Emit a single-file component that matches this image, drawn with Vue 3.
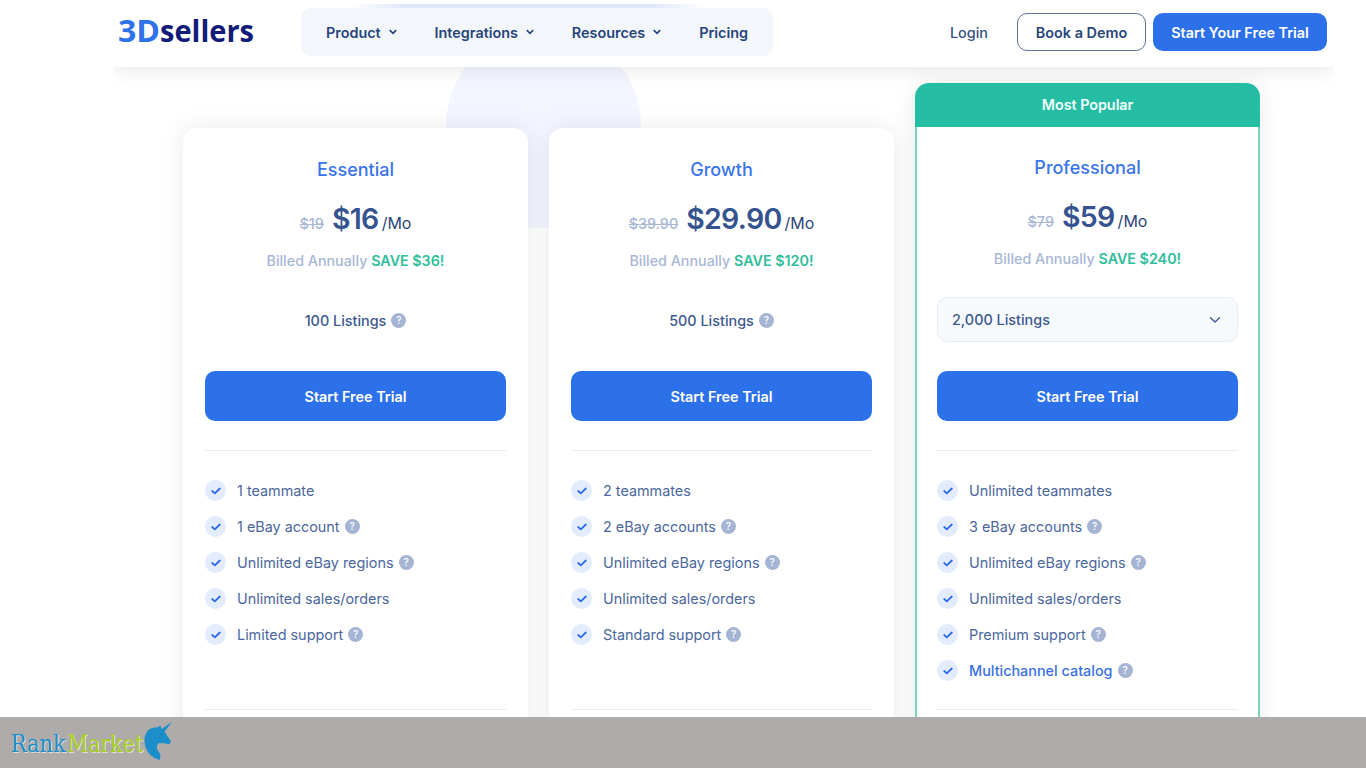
<script setup>
const navItems = [
    {title: 'Product', menu: true},
    {title: 'Integrations', menu: true},
    {title: 'Resources', menu: true},
    {title: 'Pricing', menu: false},
];

const plans = [
    {
        title: 'Essential',
        oldPrice: '$19',
        price: '$16',
        save: 'SAVE $36!',
        listings: '100 Listings',
        popular: false,
        features: [
            {title: '1 teammate'},
            {title: '1 eBay account', help: true},
            {title: 'Unlimited eBay regions', help: true},
            {title: 'Unlimited sales/orders'},
            {title: 'Limited support', help: true},
        ],
    },
    {
        title: 'Growth',
        oldPrice: '$39.90',
        price: '$29.90',
        save: 'SAVE $120!',
        listings: '500 Listings',
        popular: false,
        features: [
            {title: '2 teammates'},
            {title: '2 eBay accounts', help: true},
            {title: 'Unlimited eBay regions', help: true},
            {title: 'Unlimited sales/orders'},
            {title: 'Standard support', help: true},
        ],
    },
    {
        title: 'Professional',
        oldPrice: '$79',
        price: '$59',
        save: 'SAVE $240!',
        listings: '2,000 Listings',
        popular: true,
        features: [
            {title: 'Unlimited teammates'},
            {title: '3 eBay accounts', help: true},
            {title: 'Unlimited eBay regions', help: true},
            {title: 'Unlimited sales/orders'},
            {title: 'Premium support', help: true},
            {title: 'Multichannel catalog', help: true, link: true},
        ],
    },
];
</script>

<template>
    <div class="page">
        <div class="site">
            <header class="header">
                <svg class="logo" width="138" height="50" viewBox="0 0 138 50">
                    <text x="0" y="34" class="logo-3d" textLength="42" lengthAdjust="spacingAndGlyphs">3D</text>
                    <text x="42" y="34" class="logo-name" textLength="94" lengthAdjust="spacingAndGlyphs">sellers</text>
                </svg>
                <nav class="nav">
                    <a v-for="item in navItems" :key="item.title" class="nav-item">
                        {{ item.title }}
                        <svg v-if="item.menu" width="8" height="6" viewBox="0 0 8 6">
                            <path d="M0.800 1.200 4 4.300 7.200 1.200" fill="none" stroke="currentColor" stroke-width="1.700" />
                        </svg>
                    </a>
                </nav>
                <div class="actions">
                    <a class="login">Login</a>
                    <button class="btn-outline">Book a Demo</button>
                    <button class="btn-small">Start Your Free Trial</button>
                </div>
            </header>

            <main class="plans">
                <section v-for="plan in plans" :key="plan.title" class="card" :class="{popular: plan.popular}">
                    <div v-if="plan.popular" class="ribbon">Most Popular</div>
                    <div class="content">
                        <h3>{{ plan.title }}</h3>
                        <div class="price">
                            <s>{{ plan.oldPrice }}</s>
                            <strong>{{ plan.price }}</strong>
                            <span>/Mo</span>
                        </div>
                        <p class="billed">Billed Annually <b>{{ plan.save }}</b></p>
                        <div v-if="plan.popular" class="select">
                            {{ plan.listings }}
                            <svg width="12" height="8" viewBox="0 0 12 8">
                                <path d="M1.500 1.700 6 6 10.500 1.700" fill="none" stroke="currentColor" stroke-width="1.400" stroke-linecap="round" stroke-linejoin="round" />
                            </svg>
                        </div>
                        <div v-else class="listings">
                            {{ plan.listings }}
                            <span class="help">?</span>
                        </div>
                        <button class="btn-trial">Start Free Trial</button>
                        <ul class="features">
                            <li v-for="feature in plan.features" :key="feature.title">
                                <span class="check">
                                    <svg width="10" height="8" viewBox="0 0 10 8">
                                        <path d="M1.200 4 3.800 6.300 8.800 1.500" fill="none" stroke="#2c6be8" stroke-width="1.800" stroke-linecap="round" stroke-linejoin="round" />
                                    </svg>
                                </span>
                                <span :class="{link: feature.link}">{{ feature.title }}</span>
                                <span v-if="feature.help" class="help">?</span>
                            </li>
                        </ul>
                    </div>
                </section>
            </main>
        </div>

        <footer class="footer">
            <svg width="180" height="51" viewBox="0 0 180 51">
                <g class="rank-logo">
                    <text x="11" y="35" class="rank" textLength="55" lengthAdjust="spacingAndGlyphs">Rank</text>
                    <text x="67" y="35" class="market" textLength="76" lengthAdjust="spacingAndGlyphs">Market</text>
                </g>
                <path class="unicorn" d="M172 5 164.500 14.500C166.500 18 169.500 21.500 170.800 24 171.200 26 169.500 27.500 167.500 27 165 25.500 162 26.500 159 26 156.500 28 156 31.500 159 35 160.500 37.500 161 40 159.500 43 150.500 40.500 144.500 33 144.500 23.500 144.500 15 150 9.500 157 10.500L160.500 8.500 161.500 12Z" />
                <circle cx="162" cy="17.500" r="0.700" fill="#0b5f92" />
            </svg>
        </footer>
    </div>
</template>

<style>
body {
    margin: 0;
    overflow: hidden;
    background: #fff;
}
</style>

<style scoped>
.page {
    width: 1366px;
    height: 768px;
    overflow: hidden;
    display: flex;
    flex-direction: column;
    font-family: "Inter", "Liberation Sans", sans-serif;
    font-size: 14.4px;
    color: #2f4b84;
}

.page * {
    box-sizing: border-box;
}

button {
    font-family: inherit;
    padding: 0;
}

.site {
    width: 1221px;
    height: 717px;
    margin-left: 113px;
    overflow: hidden;
    display: flex;
    flex-direction: column;
    flex-shrink: 0;
}

.header {
    height: 67px;
    flex-shrink: 0;
    display: flex;
    align-items: flex-start;
    padding: 8px 7px 0 5px;
    position: relative;
    z-index: 1;
    background: linear-gradient(90deg, transparent, #dfe8fb 15%, #dfe8fb 85%, transparent) 235px 4px / 360px 4px no-repeat #fff;
    box-shadow: 0 2px 18px rgba(0, 0, 0, 0.1);
}

.logo {
    overflow: visible;
    font-family: "Open Sans", "Noto Sans", sans-serif;
    font-size: 31px;
    line-height: 1;
}

.logo-3d {
    font-weight: 700;
    fill: #2f73ea;
}

.logo-name {
    font-weight: 700;
    fill: #111c78;
}

.nav {
    width: 472px;
    height: 48px;
    margin-left: 45px;
    padding: 0 25px;
    display: flex;
    align-items: center;
    justify-content: space-between;
    border-radius: 10px;
    background: #f3f6fb;
}

.nav-item {
    display: flex;
    align-items: center;
    gap: 8px;
    font-weight: 600;
    color: #27457a;
}

.actions {
    margin: 5px 0 0 auto;
    display: flex;
    align-items: center;
}

.login {
    margin-right: 29px;
    font-weight: 500;
    color: #36517f;
}

.btn-outline,
.btn-small {
    height: 38px;
    border-radius: 10px;
    font-size: 14.4px;
    font-weight: 600;
}

.btn-outline {
    width: 129px;
    margin-right: 7px;
    border: 1px solid #5b7196;
    background: #fff;
    color: #27457a;
}

.btn-small {
    width: 174px;
    border: none;
    background: #2c70ea;
    color: #fff;
}

.plans {
    flex: 1;
    display: flex;
    align-items: flex-start;
    gap: 21px;
    padding: 16px 74px 0 70px;
    position: relative;
}

/* pale arch behind the first two cards */
.plans::before {
    content: "";
    position: absolute;
    left: 333px;
    top: -39px;
    width: 195px;
    height: 200px;
    border-radius: 98px 98px 0 0;
    background: #f3f6fe;
}

.card {
    flex: none;
    width: 345px;
    height: 700px;
    margin-top: 45px;
    position: relative;
    border-radius: 14px;
    background: #fff;
    box-shadow: 0 0 24px rgba(0, 0, 0, 0.085);
}

.content {
    padding: 29px 22px 0;
    display: flex;
    flex-direction: column;
}

.card.popular {
    margin-top: 0;
    overflow: hidden;
}

.popular .content {
    height: 656px;
    padding: 28px 20px 0;
    border: solid #7bd3c0;
    border-width: 0 2px;
}

.ribbon {
    height: 44px;
    line-height: 44px;
    text-align: center;
    font-size: 14.3px;
    font-weight: 600;
    color: #f2fffb;
    background: #26bda5;
}

h3 {
    margin: 0;
    line-height: 25px;
    text-align: center;
    font-size: 18px;
    font-weight: 500;
    color: #3a74ea;
}

.price {
    height: 42px;
    margin-top: 16px;
    display: flex;
    align-items: baseline;
    justify-content: center;
    line-height: 42px;
}

.price s {
    margin-right: 8px;
    font-weight: 500;
    color: #a9b7d6;
}

.price strong {
    margin-right: 3px;
    font-size: 28.5px;
    font-weight: 600;
    letter-spacing: -0.7px;
    color: #36538f;
}

.price span {
    font-size: 16px;
    color: #2c4678;
}

.billed {
    margin: 11px 0 0;
    line-height: 20px;
    text-align: center;
    font-size: 14.3px;
    font-weight: 500;
    color: #a9b7d6;
}

.billed b {
    font-weight: 600;
    color: #2fbd9c;
}

.listings,
.select {
    height: 45px;
    margin-top: 27px;
    display: flex;
    align-items: center;
    justify-content: center;
    gap: 5px;
    font-weight: 500;
    color: #3e5890;
}

.select {
    margin-top: 28px;
    justify-content: space-between;
    padding: 0 16px 0 14px;
    border: 1px solid #e7edf6;
    border-radius: 10px;
    background: #f7fafd;
}

.help {
    width: 15px;
    height: 15px;
    border-radius: 50%;
    line-height: 15px;
    text-align: center;
    font-size: 10px;
    font-weight: 500;
    color: #fff;
    background: #a6b4d3;
}

.btn-trial {
    height: 50px;
    margin-top: 28px;
    border: none;
    border-radius: 10px;
    font-size: 14.4px;
    font-weight: 600;
    color: #fff;
    background: #2c70ea;
}

.popular .btn-trial {
    margin-top: 29px;
}

.features {
    height: 260px;
    margin: 29px 0 0;
    padding: 21.5px 0 0;
    list-style: none;
    border-top: 1px solid #e9ecf2;
    border-bottom: 1px solid #e9ecf2;
}

.features li {
    height: 36px;
    display: flex;
    align-items: center;
    gap: 5px;
    color: #4b679e;
}

.check {
    width: 21px;
    height: 21px;
    margin-right: 6px;
    display: flex;
    align-items: center;
    justify-content: center;
    border-radius: 50%;
    background: #e2ecfd;
}

.link {
    font-weight: 500;
    color: #3a70e6;
}

.footer {
    flex: 1;
    background: #afabaa;
}

.footer svg {
    display: block;
    font-family: "DejaVu Serif", serif;
    font-size: 24.5px;
}

.rank-logo {
    filter: drop-shadow(1px 1px 0 #dcdcd8);
}

.rank,
.unicorn {
    fill: #1c8fcb;
}

.market {
    fill: #a5cf1d;
}
</style>
